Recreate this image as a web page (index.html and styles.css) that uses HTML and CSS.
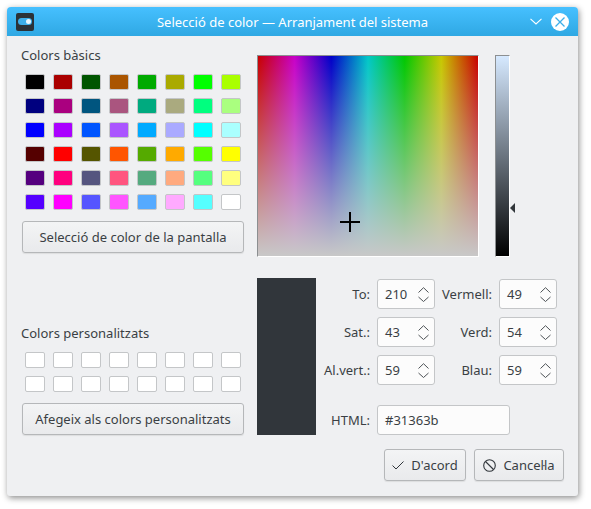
FILE: index.html
```html
<!doctype html>
<html lang="ca">
<head>
  <title>Selecció de color</title>
  <meta charset="utf-8">
  <link rel="stylesheet" href="styles.css">
</head>
<body>

  <svg class="defs" width="0" height="0">
    <symbol id="arrows" viewBox="0 0 11 15">
      <path d="M0.5 5.5 L5.5 0.7 L10.5 5.5 M0.5 10 L5.5 14.5 L10.5 10" fill="none" stroke="#4d5256" stroke-width="1"/>
    </symbol>
  </svg>

  <div class="window">
    <header class="titlebar">
      <svg class="app-icon" width="18" height="18" viewBox="0 0 18 18">
        <rect width="18" height="18" rx="2" fill="#2b3238"/>
        <rect x="2" y="5" width="14" height="7" rx="3.5" fill="#3daee9"/>
        <circle cx="12.5" cy="8.5" r="2.5" fill="#eaf6fd"/>
      </svg>
      <div class="title">Selecció de color — Arranjament del sistema</div>
      <div class="controls">
        <svg width="12" height="7" viewBox="0 0 12 7">
          <path d="M0.5 0.8 L6 6 L11.5 0.8" fill="none" stroke="#fff" stroke-width="1.1"/>
        </svg>
        <svg width="18" height="18" viewBox="0 0 18 18">
          <circle cx="9" cy="9" r="9" fill="#fff"/>
          <path d="M4.5 4.5 L13.5 13.5 M13.5 4.5 L4.5 13.5" stroke="#3daee9" stroke-width="1.3"/>
        </svg>
      </div>
    </header>

    <main class="content">
      <section class="top">
        <div class="left">
          <div class="label">Colors bàsics</div>
          <div class="swatches">
            <i style="background:#000000"></i><i style="background:#aa0000"></i><i style="background:#005500"></i><i style="background:#aa5500"></i><i style="background:#00aa00"></i><i style="background:#aaaa00"></i><i style="background:#00ff00"></i><i style="background:#aaff00"></i>
            <i style="background:#00007f"></i><i style="background:#aa007f"></i><i style="background:#00557f"></i><i style="background:#aa557f"></i><i style="background:#00aa7f"></i><i style="background:#aaaa7f"></i><i style="background:#00ff7f"></i><i style="background:#aaff7f"></i>
            <i style="background:#0000ff"></i><i style="background:#aa00ff"></i><i style="background:#0055ff"></i><i style="background:#aa55ff"></i><i style="background:#00aaff"></i><i style="background:#aaaaff"></i><i style="background:#00ffff"></i><i style="background:#aaffff"></i>
            <i style="background:#550000"></i><i style="background:#ff0000"></i><i style="background:#555500"></i><i style="background:#ff5500"></i><i style="background:#55aa00"></i><i style="background:#ffaa00"></i><i style="background:#55ff00"></i><i style="background:#ffff00"></i>
            <i style="background:#55007f"></i><i style="background:#ff007f"></i><i style="background:#55557f"></i><i style="background:#ff557f"></i><i style="background:#55aa7f"></i><i style="background:#ffaa7f"></i><i style="background:#55ff7f"></i><i style="background:#ffff7f"></i>
            <i style="background:#5500ff"></i><i style="background:#ff00ff"></i><i style="background:#5555ff"></i><i style="background:#ff55ff"></i><i style="background:#55aaff"></i><i style="background:#ffaaff"></i><i style="background:#55ffff"></i><i style="background:#ffffff"></i>
          </div>
          <button class="btn wide" type="button">Selecció de color de la pantalla</button>
        </div>

        <div class="spectrum">
          <svg class="cross" width="20" height="20" viewBox="0 0 20 20">
            <path d="M0 10 H20 M10 0 V20" stroke="#000" stroke-width="2"/>
          </svg>
        </div>

        <div class="value-bar">
          <span class="value-arrow"></span>
        </div>
      </section>

      <section class="bottom">
        <div class="left custom">
          <div class="label">Colors personalitzats</div>
          <div class="swatches">
            <i></i><i></i><i></i><i></i><i></i><i></i><i></i><i></i>
            <i></i><i></i><i></i><i></i><i></i><i></i><i></i><i></i>
          </div>
          <button class="btn wide" type="button">Afegeix als colors personalitzats</button>
        </div>

        <div class="preview"></div>

        <div class="fields">
          <label>To:</label>
          <div class="spin">210<svg width="11" height="15"><use href="#arrows"/></svg></div>
          <label>Vermell:</label>
          <div class="spin">49<svg width="11" height="15"><use href="#arrows"/></svg></div>

          <label>Sat.:</label>
          <div class="spin">43<svg width="11" height="15"><use href="#arrows"/></svg></div>
          <label>Verd:</label>
          <div class="spin">54<svg width="11" height="15"><use href="#arrows"/></svg></div>

          <label>Al.vert.:</label>
          <div class="spin">59<svg width="11" height="15"><use href="#arrows"/></svg></div>
          <label>Blau:</label>
          <div class="spin">59<svg width="11" height="15"><use href="#arrows"/></svg></div>

          <label class="html-label">HTML:</label>
          <div class="spin html-input">#31363b</div>
        </div>
      </section>

      <footer class="actions">
        <button class="btn" type="button">
          <svg width="12" height="9" viewBox="0 0 12 9">
            <path d="M0.5 4.5 L4 8 L11.5 0.5" fill="none" stroke="#31363b" stroke-width="1"/>
          </svg>
          D'acord
        </button>
        <button class="btn" type="button">
          <svg width="13" height="13" viewBox="0 0 13 13">
            <circle cx="6.5" cy="6.5" r="5.8" fill="none" stroke="#31363b" stroke-width="1.1"/>
            <path d="M2.5 2.5 L10.5 10.5" stroke="#31363b" stroke-width="1.1"/>
          </svg>
          Cancel·la
        </button>
      </footer>
    </main>
  </div>

</body>
</html>
```

FILE: styles.css
```css
* {
  box-sizing: border-box;
}
html, body {
  margin: 0;
  background: #fff;
}
body {
  padding: 7px 13px 13px 7px;
  font: 13px/18px "Noto Sans", sans-serif;
  color: #3a3f44;
}
.defs {
  position: absolute;
}

.window {
  width: 571px;
  height: 489px;
  background: #eff0f2;
  border-radius: 4px 4px 3px 3px;
  box-shadow: 1px 2px 6px rgba(0, 0, 0, 0.45);
  overflow: visible;
}

.titlebar {
  height: 29px;
  padding: 0 9px;
  display: grid;
  grid-template-columns: 1fr auto 1fr;
  align-items: center;
  background: linear-gradient(#46c0ff, #2fa8e3);
  border-radius: 4px 4px 0 0;
  color: #fff;
}
.title {
  white-space: nowrap;
}
.controls {
  justify-self: end;
  display: flex;
  align-items: center;
  gap: 9px;
}
.app-icon {
  display: block;
}

.content {
  padding: 10px 14px 15px 14px;
}

.top {
  display: flex;
  align-items: flex-start;
}
.left {
  width: 224px;
  flex: none;
}
.label {
  height: 18px;
}
.swatches {
  margin: 10px 0 11px 4px;
  display: grid;
  grid-template-columns: repeat(8, 20px);
  grid-auto-rows: 16px;
  gap: 8px;
}
.swatches i {
  display: block;
  background: #fff;
  border: 1px solid #c4c6c8;
  border-radius: 2px;
}

.btn {
  height: 32px;
  padding: 0 9px;
  display: inline-flex;
  align-items: center;
  justify-content: center;
  gap: 7px;
  font: inherit;
  color: inherit;
  background: linear-gradient(#f3f4f5, #e9eaec);
  border: 1px solid #b5b7b9;
  border-radius: 3px;
  box-shadow: 0 1px 1px rgba(0, 0, 0, 0.08);
}
.wide {
  width: 222px;
  margin-left: 1px;
}

.spectrum {
  position: relative;
  width: 222px;
  height: 202px;
  margin: 9px 0 0 12px;
  flex: none;
  border-style: solid;
  border-width: 1px;
  border-color: #8c8f91 #fff #fff #8c8f91;
  background:
    linear-gradient(rgba(200, 200, 200, 0), #c8c8c8),
    linear-gradient(to right, #c80000, #c800c8, #0000c8, #00c8c8, #00c800, #c8c800, #c80000);
}
.cross {
  position: absolute;
  left: 82px;
  top: 156px;
}

.value-bar {
  position: relative;
  width: 15px;
  height: 202px;
  margin: 9px 0 0 16px;
  flex: none;
  border-style: solid;
  border-width: 1px;
  border-color: #8c8f91 #fff #fff #8c8f91;
  background: linear-gradient(#d6e9ff, #000);
}
.value-arrow {
  position: absolute;
  left: 14px;
  top: 147px;
  border-style: solid;
  border-width: 5px 5px 5px 0;
  border-color: transparent #31363b transparent transparent;
}

.bottom {
  margin-top: 21px;
  height: 157px;
  display: flex;
}
.custom {
  align-self: flex-end;
}
.preview {
  width: 59px;
  margin-left: 12px;
  flex: none;
  background: #31363b;
}

.fields {
  margin: 1px 0 0 8px;
  display: grid;
  grid-template-columns: 46px 58px 50px 58px;
  grid-template-rows: 30px 30px 30px 42px;
  column-gap: 7px;
  row-gap: 8px;
  align-items: center;
}
.fields label {
  text-align: right;
  white-space: nowrap;
}
.spin {
  height: 30px;
  padding: 0 5px 0 7px;
  display: flex;
  align-items: center;
  justify-content: space-between;
  background: #fcfcfc;
  border: 1px solid #c4c6c8;
  border-radius: 3px;
}
.fields .html-label {
  align-self: end;
  line-height: 30px;
}
.html-input {
  align-self: end;
  width: 133px;
  grid-column: 2 / 5;
}

.actions {
  margin: 14px 0 0 0;
  display: flex;
  justify-content: flex-end;
  gap: 8px;
}
.actions .btn {
  width: 82px;
  padding: 0;
}
.actions .btn + .btn {
  width: 90px;
}
```
